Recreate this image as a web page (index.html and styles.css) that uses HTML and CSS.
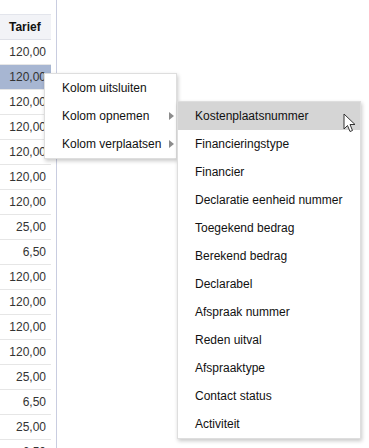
FILE: index.html
```html
<!DOCTYPE html>
<html>
<head>
<meta charset="UTF-8">
<title>Tarief</title>
<link rel="stylesheet" href="styles.css">
</head>
<body>
  <div class="view">
    <div class="col">
      <div class="head">Tarief</div>
      <div class="cell">120,00</div>
      <div class="cell selected">120,00</div>
      <div class="cell">120,00</div>
      <div class="cell">120,00</div>
      <div class="cell">120,00</div>
      <div class="cell">120,00</div>
      <div class="cell">120,00</div>
      <div class="cell">25,00</div>
      <div class="cell">6,50</div>
      <div class="cell">120,00</div>
      <div class="cell">120,00</div>
      <div class="cell">120,00</div>
      <div class="cell">120,00</div>
      <div class="cell">25,00</div>
      <div class="cell">6,50</div>
      <div class="cell">25,00</div>
      <div class="cell">6,50</div>
    </div>
  </div>

  <ul class="menu main-menu">
    <li>Kolom uitsluiten</li>
    <li class="has-sub">Kolom opnemen<span class="arrow"></span></li>
    <li class="has-sub">Kolom verplaatsen<span class="arrow"></span></li>
  </ul>

  <ul class="menu sub-menu">
    <li class="active">Kostenplaatsnummer</li>
    <li>Financieringstype</li>
    <li>Financier</li>
    <li>Declaratie eenheid nummer</li>
    <li>Toegekend bedrag</li>
    <li>Berekend bedrag</li>
    <li>Declarabel</li>
    <li>Afspraak nummer</li>
    <li>Reden uitval</li>
    <li>Afspraaktype</li>
    <li>Contact status</li>
    <li>Activiteit</li>
  </ul>

  <svg class="cursor" width="14" height="20" viewBox="0 0 14 20">
    <path d="M1 1 L1 16 L4.5 12.5 L7 18.5 L9.5 17.5 L7 11.5 L12 11.5 Z" fill="#fff" stroke="#333" stroke-width="1" stroke-linejoin="round"/>
  </svg>
</body>
</html>
```

FILE: styles.css
```css
* {
  margin: 0;
  padding: 0;
  box-sizing: border-box;
}

html, body {
  height: 100%;
}

body {
  background: #fff;
  font-family: "Liberation Sans", Arial, sans-serif;
  font-size: 12px;
  color: #222;
  overflow: hidden;
}

.view {
  width: 57px;
  height: 100%;
  padding-top: 14px;
  border-right: 1px solid #c9cde0;
}

.col {
  width: 51px;
}

.head {
  height: 26px;
  line-height: 24px;
  padding-left: 9px;
  font-weight: bold;
  color: #111;
  background: #f2f3f7;
  border-top: 1px solid #e3e5ec;
  border-bottom: 1px solid #dfe1e8;
}

.cell {
  height: 25px;
  line-height: 24px;
  padding-right: 5px;
  text-align: right;
  color: #333;
  border-bottom: 1px solid #e6e6e6;
}

.cell.selected {
  background: #a7b6d2;
}

.menu {
  position: absolute;
  list-style: none;
  background: #fff;
  border: 1px solid #dedede;
  box-shadow: 1px 2px 4px rgba(0, 0, 0, 0.22);
}

.menu li {
  height: 28px;
  line-height: 28px;
  padding-left: 17px;
  color: #111;
  white-space: nowrap;
}

.main-menu {
  left: 44px;
  top: 73px;
  width: 133px;
}

.main-menu .has-sub {
  display: flex;
  justify-content: space-between;
  align-items: center;
  padding-right: 2px;
}

.arrow {
  width: 0;
  height: 0;
  border-top: 4px solid transparent;
  border-bottom: 4px solid transparent;
  border-left: 5px solid #8c8c8c;
}

.sub-menu {
  left: 177px;
  top: 101px;
  width: 184px;
}

.sub-menu li.active {
  background: #d5d5d5;
}

.cursor {
  position: absolute;
  left: 343px;
  top: 113px;
}
```
